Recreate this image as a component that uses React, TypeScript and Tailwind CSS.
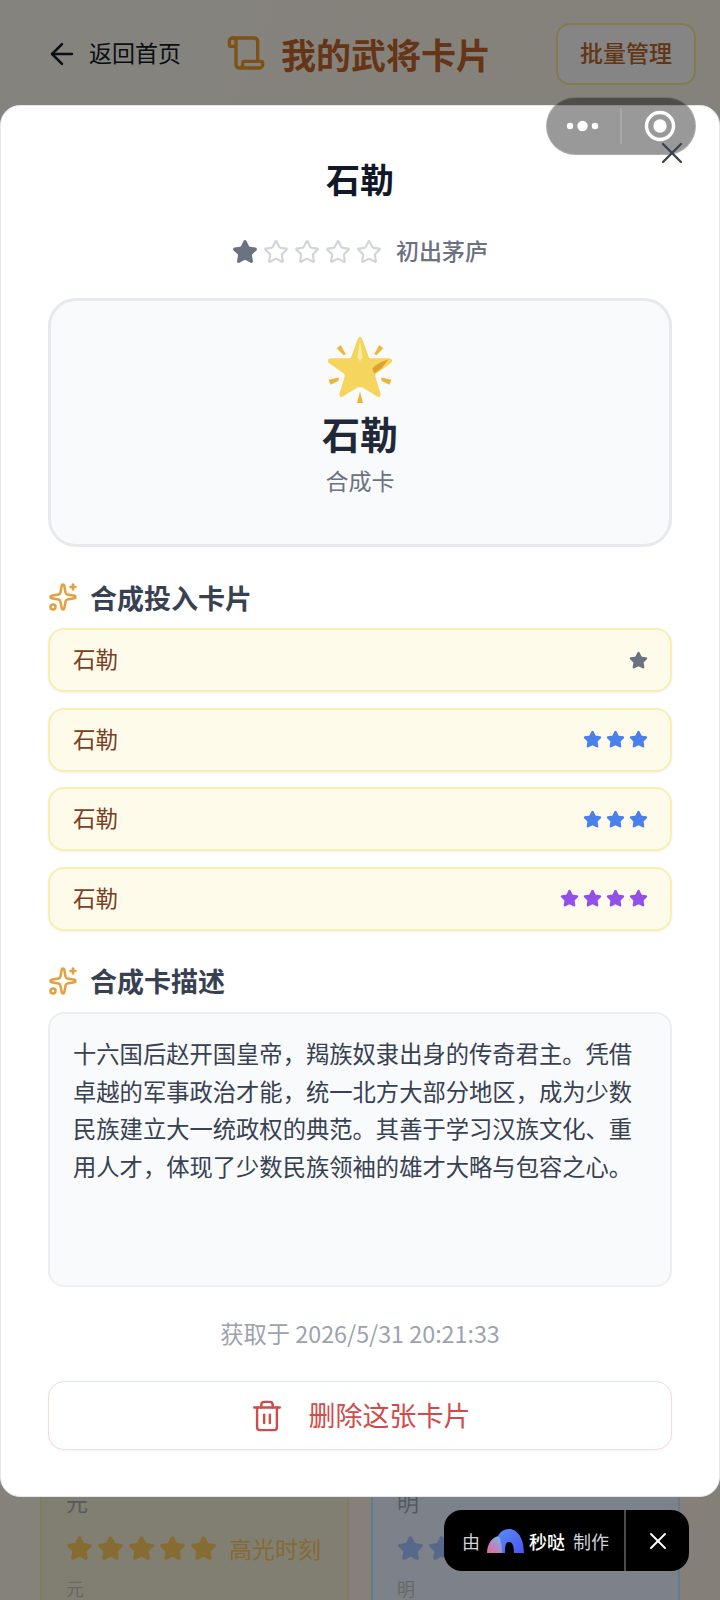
import { ArrowLeft, Scroll, Sparkles, Star, Trash2, X } from "lucide-react";

const font = "font-['Noto_Sans_CJK_SC','Noto_Sans',sans-serif]";

const inputCards = [
  { stars: 1, color: "text-[#6b7280]" },
  { stars: 3, color: "text-[#4a80ea]" },
  { stars: 3, color: "text-[#4a80ea]" },
  { stars: 4, color: "text-[#9150e8]" },
];

function GlowingStar() {
  return (
    <svg viewBox="0 0 64 66" className="w-[66px] h-[67px]">
      <path
        d="M32 0 C33 0 34 1 35 4 L40 18 C40.500 20 41 21 43 21 L60 21 C64 21 65 24 62 26 L48 36 C47 37 47 38 47 39 L52 55 C53 59 51 60 48 58 L35 50 C33 49 31 49 29 50 L16 58 C13 60 11 59 12 55 L17 39 C17 38 17 37 16 36 L2 26 C-1 24 0 21 4 21 L21 21 C23 21 23.500 20 24 18 L29 4 C30 1 31 0 32 0 Z"
        fill="#f6d55f"
      />
      <g fill="#eeb63c">
        <path d="M9 11 L13 8 L18 17 L16 18 Z" />
        <path d="M55 11 L51 8 L46 17 L48 18 Z" />
        <path d="M1 42 L11 40 L11 43 L3 47 Z" />
        <path d="M63 42 L53 40 L53 43 L61 47 Z" />
        <path d="M32 54 L35 65 L29 65 Z" />
      </g>
      <path d="M32 4 L34.500 20 L32 24 L29.500 20 Z" fill="#fbeea0" />
      <path d="M44 31 C48 27 54 24 60 22 L53 31 L46 36 Z" fill="#dfa02f" />
    </svg>
  );
}

function SectionTitle({ children }: { children: string }) {
  return (
    <div className="flex items-center gap-[12px] h-[32px]">
      <Sparkles className="w-[30px] h-[30px] text-[#e2a03f]" strokeWidth={2} />
      <span className="text-[27px] font-semibold text-[#374151] leading-none">
        {children}
      </span>
    </div>
  );
}

function App() {
  return (
    <div
      className={`relative w-[720px] h-[1600px] overflow-hidden bg-gradient-to-br from-[#f3efe4] to-[#f3e8de] ${font}`}
    >
      {/* page behind the dialog */}
      <div className="flex items-center pl-[45px] pr-[24px] pt-[23px]">
        <div className="flex items-center gap-[10px] text-[#111827]">
          <ArrowLeft className="w-[34px] h-[34px]" strokeWidth={1.8} />
          <span className="text-[23px] leading-none pb-[3px]">返回首页</span>
        </div>
        <div className="flex items-center gap-[15px] ml-[45px] pb-[2px]">
          <Scroll className="w-[40px] h-[40px] text-[#e2952a]" strokeWidth={2} />
          <span className="text-[35px] font-bold text-[#b9622a] leading-none">
            我的武将卡片
          </span>
        </div>
        <div className="ml-auto w-[140px] h-[62px] flex items-center justify-center rounded-[14px] border-2 border-[#f2dd8f] bg-[#f3f4f6]/80 text-[23px] font-medium text-[#b4612a] pb-[3px]">
          批量管理
        </div>
      </div>
      <div className="grid grid-cols-2 gap-[22px] px-[40px] mt-[1321px]">
        <div className="border-2 border-[#ece2a8] bg-[#ece8cf] pl-[24px] pt-[82px] h-[300px]">
          <p className="text-[22px] text-[#9ca3af] leading-none">元</p>
          <div className="flex items-center mt-[19px] h-[34px]">
            {[0, 1, 2, 3, 4].map((i) => (
              <Star
                key={i}
                className="w-[27px] h-[27px] mr-[4px] text-[#f5c45c] fill-current"
              />
            ))}
            <span className="ml-[8px] text-[23px] text-[#f2c060]">高光时刻</span>
          </div>
          <p className="text-[18px] text-[#bcbcb4] mt-[14px] leading-none">元</p>
        </div>
        <div className="border-2 border-[#bfdbfe] bg-[#e3ecf9] pl-[24px] pt-[82px] h-[300px]">
          <p className="text-[22px] text-[#9ca3af] leading-none">明</p>
          <div className="flex items-center mt-[19px] h-[34px]">
            {[0, 1, 2].map((i) => (
              <Star
                key={i}
                className="w-[27px] h-[27px] mr-[4px] text-[#9ebdfb] fill-current"
              />
            ))}
          </div>
          <p className="text-[18px] text-[#bcbcb4] mt-[14px] leading-none">明</p>
        </div>
      </div>

      <div className="absolute inset-0 bg-black/45" />

      {/* dialog */}
      <div className="absolute left-0 top-[105px] w-[720px] h-[1392px] rounded-[20px] bg-white border border-[#e5e7eb] px-[47px]">
        <X
          className="absolute right-[29px] top-[29px] w-[36px] h-[36px] text-[#374151] z-10"
          strokeWidth={1.5}
        />
        <h2 className="text-center text-[34px] font-semibold text-[#111827] leading-none pt-[56px]">
          石勒
        </h2>
        <div className="flex items-center justify-center gap-[5px] mt-[43px] h-[26px]">
          <Star className="w-[26px] h-[26px] text-[#6b7280] fill-current" />
          {[0, 1, 2, 3].map((i) => (
            <Star key={i} className="w-[26px] h-[26px] text-[#d1d5db]" strokeWidth={2} />
          ))}
          <span className="ml-[9px] text-[23px] font-medium text-[#6b7280] leading-none pb-[3px]">
            初出茅庐
          </span>
        </div>
        <div className="mt-[33px] h-[249px] rounded-[28px] border-[3px] border-[#e8e9ec] bg-[#f9fafb] flex flex-col items-center pt-[36px]">
          <GlowingStar />
          <p className="text-[38px] font-bold text-[#1f2937] leading-none mt-[10px]">
            石勒
          </p>
          <p className="text-[23px] text-[#6b7280] leading-none mt-[17px]">合成卡</p>
        </div>
        <div className="mt-[34px]">
          <SectionTitle>合成投入卡片</SectionTitle>
        </div>
        <div className="flex flex-col gap-[15.600px] mt-[15px]">
          {inputCards.map((card, i) => (
            <div
              key={i}
              className="h-[64px] flex items-center justify-between rounded-[16px] border-2 border-[#faeeb4] bg-[#fffbeb] pl-[23px] pr-[22px] shadow-[0_1px_3px_rgba(0,0,0,0.06)]"
            >
              <span className="text-[22.500px] text-[#78401f] leading-none pb-[3px]">石勒</span>
              <div className={`flex gap-[4px] ${card.color}`}>
                {Array.from({ length: card.stars }).map((_, j) => (
                  <Star key={j} className="w-[19px] h-[19px] fill-current" />
                ))}
              </div>
            </div>
          ))}
        </div>
        <div className="mt-[34px]">
          <SectionTitle>合成卡描述</SectionTitle>
        </div>
        <div className="mt-[15px] h-[275px] rounded-[16px] border-2 border-[#eceef1] bg-[#f9fafb] px-[23px] pt-[21px] text-[23.300px] leading-[37.800px] text-[#374151]">
          十六国后赵开国皇帝，羯族奴隶出身的传奇君主。凭借卓越的军事政治才能，统一北方大部分地区，成为少数民族建立大一统政权的典范。其善于学习汉族文化、重用人才，体现了少数民族领袖的雄才大略与包容之心。
        </div>
        <p className="text-center text-[23.300px] text-[#9ca3af] leading-none mt-[35px]">
          获取于 2026/5/31 20:21:33
        </p>
        <button className="mt-[36px] w-full h-[69px] flex items-center justify-center gap-[25px] rounded-[16px] border-[1.500px] border-[#f6d9d9] bg-white text-[#d14b4b] shadow-[0_1px_2px_rgba(0,0,0,0.04)]">
          <Trash2 className="w-[34px] h-[34px]" strokeWidth={1.7} />
          <span className="text-[27px] leading-none pb-[2px]">删除这张卡片</span>
        </button>
      </div>

      {/* mini program capsule */}
      <div className="absolute left-[546px] top-[97px] w-[150px] h-[58px] rounded-full bg-black/40 border border-white/20">
        <svg viewBox="0 0 148 56" className="w-[148px] h-[56px]">
          <circle cx="23" cy="28" r="3.200" fill="#fff" />
          <circle cx="35.500" cy="28" r="5.200" fill="#fff" />
          <circle cx="48" cy="28" r="3.200" fill="#fff" />
          <line x1="74" y1="10" x2="74" y2="46" stroke="#fff" strokeOpacity="0.3" />
          <circle cx="113" cy="28" r="13.500" fill="none" stroke="#fff" strokeWidth="3.400" />
          <circle cx="113" cy="28" r="6.700" fill="#fff" />
        </svg>
      </div>

      {/* made with badge */}
      <div className="absolute left-[444px] top-[1510px] w-[245px] h-[61px] rounded-[18px] bg-black flex items-center text-[18px] leading-none">
        <div className="w-[182px] h-full flex items-center pl-[18px] border-r-2 border-[#4b4b4b] text-[#d1d5db]">
          <span>由</span>
          <svg viewBox="0 0 37 24" className="w-[37px] h-[24px] ml-[7px]">
            <defs>
              <linearGradient id="arcLeft" x1="0" y1="1" x2="1" y2="0">
                <stop offset="0" stopColor="#f4609c" />
                <stop offset="1" stopColor="#62c0f4" />
              </linearGradient>
              <linearGradient id="arcRight" x1="0" y1="0" x2="1" y2="1">
                <stop offset="0" stopColor="#5a8cf8" />
                <stop offset="1" stopColor="#4a55f4" />
              </linearGradient>
            </defs>
            <path d="M0 24 C0 14 6 7 13 7 C16 9 17 14 17 24 Z" fill="url(#arcLeft)" />
            <path d="M11 7 C13 3 17 0 22 0 C31 0 37 10 37 24 L27 24 C27 16 25 13 22 13 C19 13 18 16 18 24 L15 24 C15 16 14 10 11 7 Z" fill="url(#arcRight)" />
          </svg>
          <span className="ml-[5px] font-medium text-white">秒哒</span>
          <span className="ml-[8px]">制作</span>
        </div>
        <div className="flex-1 flex items-center justify-center text-white">
          <X className="w-[28px] h-[28px]" strokeWidth={1.6} />
        </div>
      </div>
    </div>
  );
}

export default App;
